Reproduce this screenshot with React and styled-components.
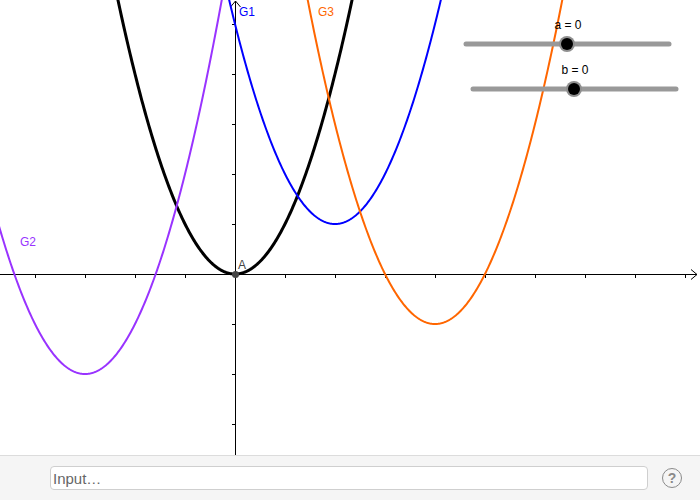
import React from "react";
import styled, { createGlobalStyle } from "styled-components";

const Global = createGlobalStyle`
  html, body { margin: 0; padding: 0; background: #fff; }
  body { font-family: "Liberation Sans", Arial, sans-serif; }
`;

const Page = styled.div`
  width: 700px;
  height: 500px;
  display: flex;
  flex-direction: column;
  overflow: hidden;
`;

const GraphView = styled.div`
  height: 455px;
  flex: none;
  background: #fff;
  border-bottom: 1px solid #dcdcdc;
`;

const Canvas = styled.svg`
  display: block;
  width: 700px;
  height: 455px;
`;

const InputBar = styled.div`
  flex: 1;
  background: #f5f5f5;
  display: flex;
  align-items: center;
  padding: 0 18px 0 50px;
  gap: 14px;
`;

const InputField = styled.input`
  flex: 1;
  height: 24px;
  box-sizing: border-box;
  border: 1px solid #cfcfcf;
  border-radius: 4px;
  background: #fff;
  padding: 0 2px;
  font-family: "Liberation Sans", Arial, sans-serif;
  font-size: 15px;
  color: #333;
  outline: none;
  &::placeholder { color: #666; }
`;

const HelpButton = styled.div`
  width: 18px;
  height: 18px;
  flex: none;
  border: 1.6px solid #8a8a8a;
  border-radius: 50%;
  display: flex;
  align-items: center;
  justify-content: center;
  color: #8a8a8a;
  font-family: "Liberation Sans", Arial, sans-serif;
  font-weight: bold;
  font-size: 14px;
  line-height: 1;
`;

const OX = 235;
const OY = 274;
const U = 50;

function parabola(h, k) {
  const pts = [];
  for (let x = -6; x <= 10; x += 0.02) {
    const y = (x - h) * (x - h) + k;
    const py = OY - U * y;
    if (py < -40) continue;
    pts.push(`${(OX + U * x).toFixed(2)},${py.toFixed(2)}`);
  }
  return pts.join(" ");
}

const curves = [
  { h: 0, k: 0, color: "#000000", w: 3 },
  { h: 2, k: 1, color: "#0000ff", w: 2 },
  { h: -3, k: -2, color: "#9933ff", w: 2 },
  { h: 4, k: -1, color: "#ff6600", w: 2 },
];

function Slider({ x1, x2, y, thumb, label }) {
  return (
    <g>
      <text x={thumb + 1} y={y - 15} textAnchor="middle" fontSize="12" fill="#000"
        fontFamily="Liberation Sans, Arial, sans-serif">{label}</text>
      <line x1={x1} x2={x2} y1={y} y2={y} stroke="#999" strokeWidth="5" strokeLinecap="round" />
      <circle cx={thumb} cy={y} r="8" fill="#8f8f8f" />
      <circle cx={thumb} cy={y} r="6" fill="#000" />
    </g>
  );
}

export default function App() {
  const xTicks = [];
  for (let x = 35; x <= 685; x += 50) if (x !== OX) xTicks.push(x);
  const yTicks = [];
  for (let y = 24; y <= 424; y += 50) if (y !== OY) yTicks.push(y);

  return (
    <>
      <Global />
      <Page>
        <GraphView>
          <Canvas viewBox="0 0 700 455">
            <line x1="0" x2="697" y1={OY + 0.5} y2={OY + 0.5} stroke="#000" strokeWidth="1" />
            <polyline points={`691,${OY - 4.5} 697,${OY + 0.5} 691,${OY + 5.5}`} fill="none" stroke="#000" strokeWidth="1" />
            <line x1={OX + 0.5} x2={OX + 0.5} y1="1" y2="455" stroke="#000" strokeWidth="1" />
            <polyline points={`${OX - 4.5},7 ${OX + 0.5},1 ${OX + 5.5},7`} fill="none" stroke="#000" strokeWidth="1" />
            {xTicks.map((x) => (
              <line key={x} x1={x + 0.5} x2={x + 0.5} y1={OY} y2={OY + 4} stroke="#000" strokeWidth="1" />
            ))}
            {yTicks.map((y) => (
              <line key={y} x1={OX - 3} x2={OX} y1={y + 0.5} y2={y + 0.5} stroke="#000" strokeWidth="1" />
            ))}

            {curves.map((c, i) => (
              <polyline key={i} points={parabola(c.h, c.k)} fill="none" stroke={c.color}
                strokeWidth={c.w} strokeLinejoin="round" />
            ))}

            <g fontFamily="Liberation Sans, Arial, sans-serif" fontSize="12">
              <text x="239" y="16" fill="#0000ff">G1</text>
              <text x="318" y="16" fill="#ff6600">G3</text>
              <text x="20" y="246" fill="#9933ff">G2</text>
              <text x="238" y="269" fill="#444">A</text>
            </g>

            <circle cx={OX + 0.5} cy={OY + 0.5} r="3.5" fill="#444" />

            <Slider x1={466} x2={669} y={44} thumb={567} label="a = 0" />
            <Slider x1={473} x2={676} y={89} thumb={574} label="b = 0" />
          </Canvas>
        </GraphView>
        <InputBar>
          <InputField placeholder="Input…" />
          <HelpButton>?</HelpButton>
        </InputBar>
      </Page>
    </>
  );
}
